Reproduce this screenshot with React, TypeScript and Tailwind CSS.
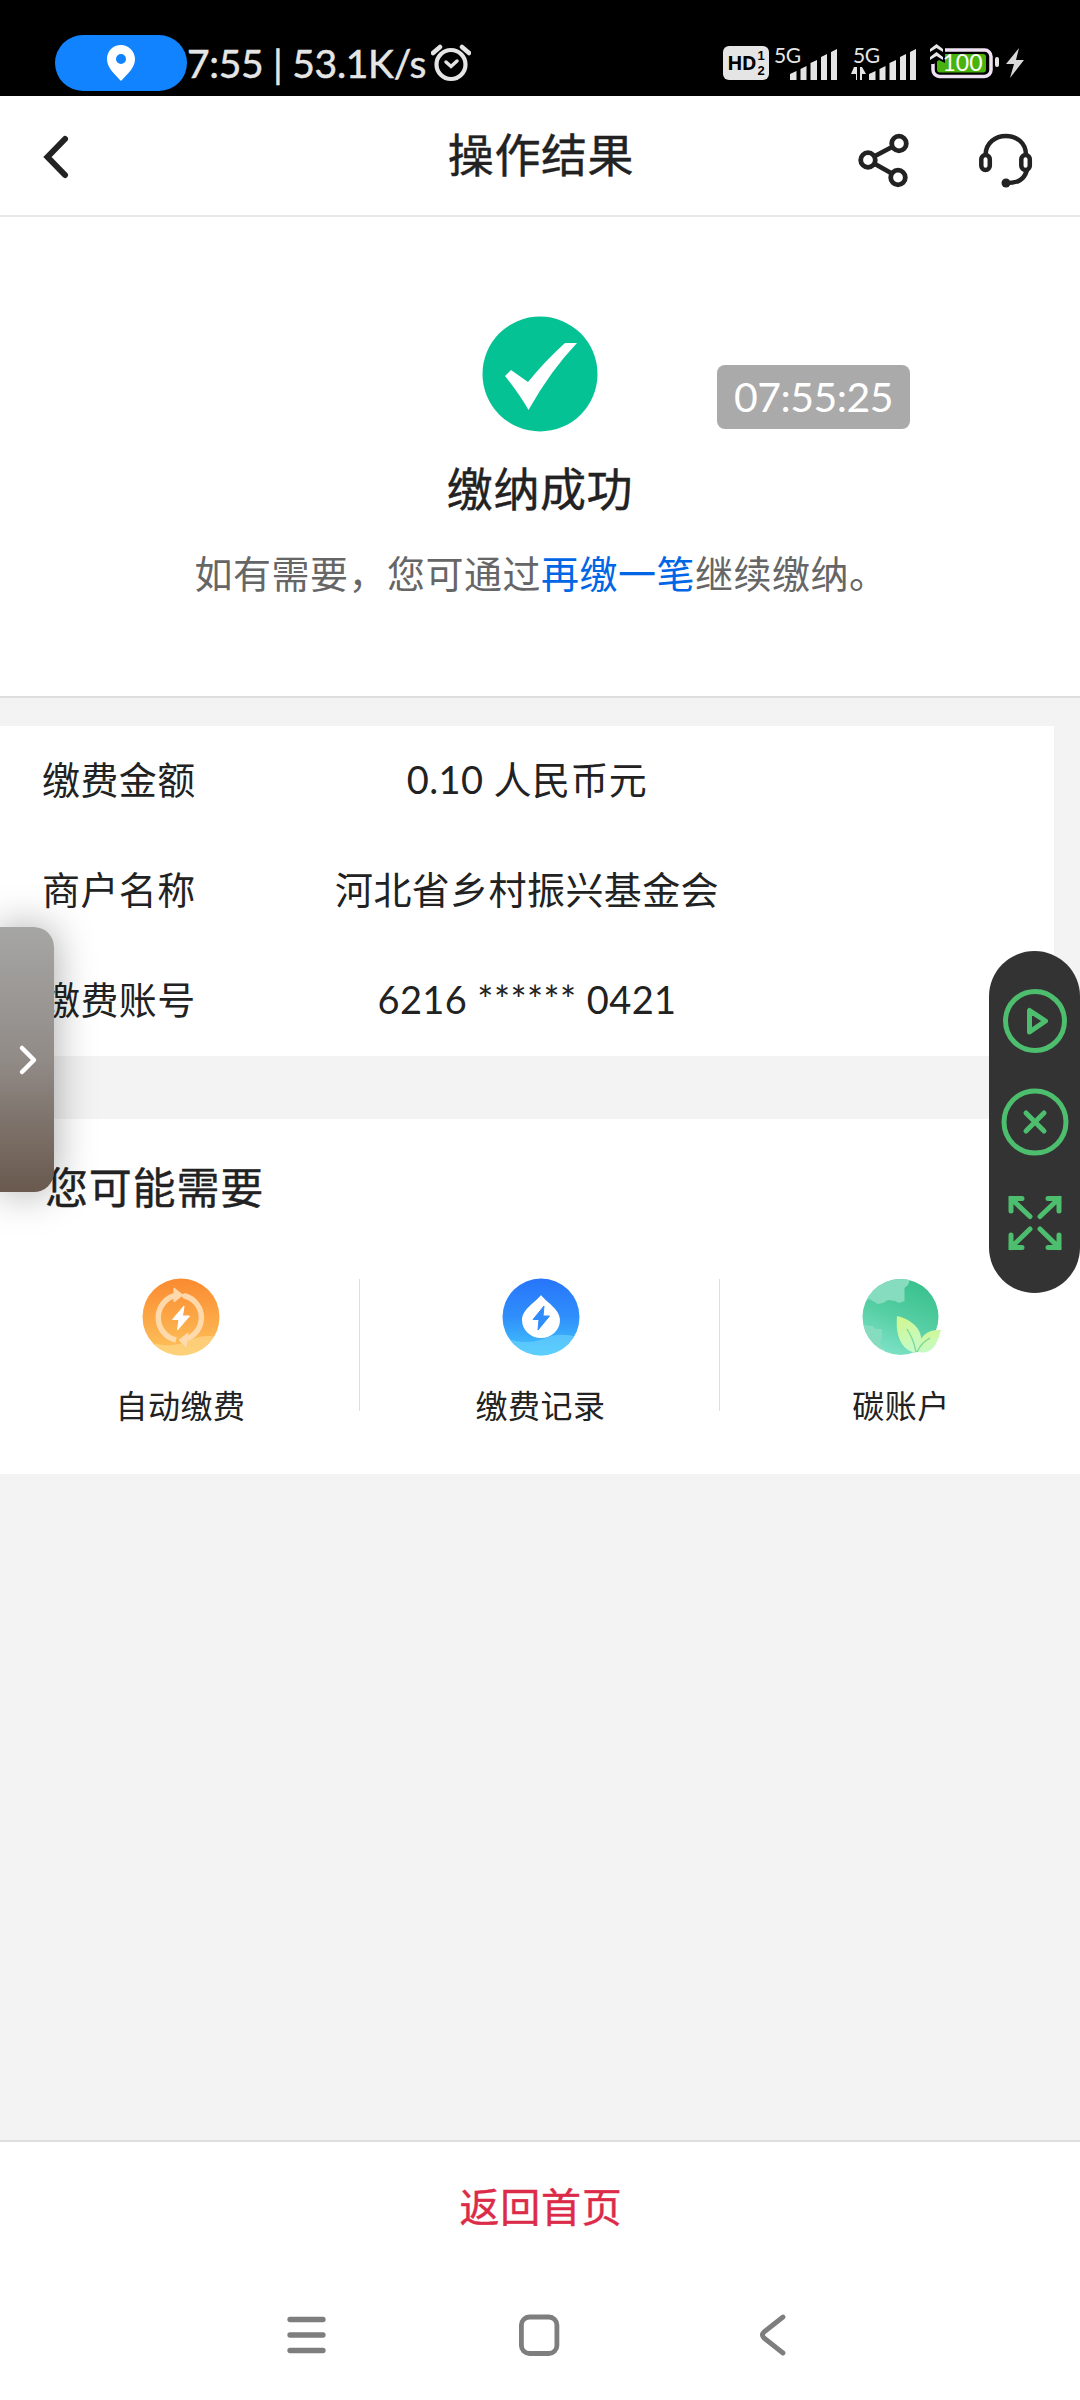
import React from 'react';

interface DetailRow {
  label: string;
  value: string;
}

interface Shortcut {
  name: string;
  icon: React.ReactNode;
}

const DETAILS: DetailRow[] = [
  { label: '缴费金额', value: '0.10 人民币元' },
  { label: '商户名称', value: '河北省乡村振兴基金会' },
  { label: '缴费账号', value: '6216 ****** 0421' },
];

const SHORTCUTS: Shortcut[] = [
  { name: '自动缴费', icon: <AutoPayIcon /> },
  { name: '缴费记录', icon: <PayRecordIcon /> },
  { name: '碳账户', icon: <CarbonIcon /> },
];

/* Icons */

function AutoPayIcon() {
  return (
    <svg className="w-20 h-20" viewBox="0 0 80 80">
      <defs>
        <linearGradient id="autoBg" x1="0" y1="0" x2="0" y2="1">
          <stop offset="0" stopColor="#fb8a30" />
          <stop offset="1" stopColor="#fdc35c" />
        </linearGradient>
        <clipPath id="autoClip">
          <circle cx="40" cy="40" r="38.5" />
        </clipPath>
      </defs>
      <circle cx="40" cy="40" r="38.5" fill="url(#autoBg)" />
      <path
        d="M0 63C14 68 28 70 42 66C54 61 64 56 78 61V80H0Z"
        fill="#fedb90"
        opacity="0.6"
        clipPath="url(#autoClip)"
      />
      <path d="M36 18A23 23 0 0 0 35 63" fill="none" stroke="#fed9ac" strokeWidth="5.5" />
      <path d="M44 19A22.5 22.5 0 0 1 45 62" fill="none" stroke="#fed9ac" strokeWidth="5.5" strokeLinecap="round" />
      <path d="M33 11L42 18L33 25Z M47 56L38 63L45 70Z" fill="#fed9ac" stroke="#fed9ac" strokeWidth="1" />
      <path d="M43 29L31.5 42.5H38L36.5 53L48.5 39H41.5Z" fill="#fff" stroke="#fff" strokeWidth="1" strokeLinejoin="round" />
    </svg>
  );
}

function PayRecordIcon() {
  return (
    <svg className="w-20 h-20" viewBox="0 0 80 80">
      <defs>
        <linearGradient id="recordBg" x1="0" y1="0" x2="0" y2="1">
          <stop offset="0" stopColor="#2775fb" />
          <stop offset="0.5" stopColor="#308ffb" />
          <stop offset="1" stopColor="#43c8fb" />
        </linearGradient>
        <clipPath id="recordClip">
          <circle cx="40" cy="40" r="38.5" />
        </clipPath>
      </defs>
      <circle cx="40" cy="40" r="38.5" fill="url(#recordBg)" />
      <path
        d="M0 60C14 65 28 67 42 62C54 57 64 56 80 61V80H0Z"
        fill="#6ed3fd"
        opacity="0.6"
        clipPath="url(#recordClip)"
      />
      <path d="M40 18C44 24 59 32 59 43A19 18 0 0 1 21 43C21 32 36 24 40 18Z" fill="#fff" />
      <path d="M43 29L32 42.5H38L37 53L48.5 39H42Z" fill="#318cfb" stroke="#318cfb" strokeWidth="1" strokeLinejoin="round" />
    </svg>
  );
}

function CarbonIcon() {
  return (
    <svg className="w-20 h-20" viewBox="0 0 80 80">
      <defs>
        <linearGradient id="carbonBg" x1="0.7" y1="0" x2="0.3" y2="1">
          <stop offset="0" stopColor="#38c08c" />
          <stop offset="0.5" stopColor="#55cea3" />
          <stop offset="1" stopColor="#7fe3c8" />
        </linearGradient>
        <linearGradient id="leafBg" x1="0" y1="0" x2="0.3" y2="1">
          <stop offset="0" stopColor="#d3f78b" />
          <stop offset="1" stopColor="#c5fac6" />
        </linearGradient>
        <clipPath id="carbonClip">
          <circle cx="39.5" cy="40" r="38" />
        </clipPath>
      </defs>
      <circle cx="39.5" cy="40" r="38" fill="url(#carbonBg)" />
      <g clipPath="url(#carbonClip)" fill="#86dcbf">
        <path d="M0 0H50L47 8L43.5 11V24L38 26L34 24L27 23L22 26L17 27L8 22L0 26Z" />
        <path d="M0 48L12 49L14 52H21V59L19 66L22 73L14 72L0 60Z" />
      </g>
      <path d="M36 39C52 43 62 53 60 67L55 76C43 74 34 63 36 39Z" fill="url(#leafBg)" />
      <path d="M80 53C67 52 57 59 56 75C72 78 76 67 80 53Z" fill="url(#leafBg)" />
      <path d="M46 52Q53 63 55 75M69 61Q60 66 56 75" fill="none" stroke="#77d79b" strokeWidth="1.3" />
    </svg>
  );
}

function SignalBars() {
  return (
    <svg className="w-12 h-[31px]" viewBox="0 0 48 31" fill="#e5e5e5">
      <path d="M0 25L6.5 22V31H0Z M10.5 20L16.5 17V31H10.5Z M20.5 14L27 11V31H20.5Z M31 8L37 5V31H31Z M41 3L47 0V31H41Z" />
    </svg>
  );
}

function StatusBar() {
  return (
    <div className="flex h-24 bg-black pl-[55px] pt-[35px] text-[#e5e5e5]">
      <div className="flex h-14 w-[132px] items-center justify-center rounded-full bg-[#1183fe]">
        <svg className="h-9 w-7" viewBox="0 0 28 36">
          <path
            d="M14 0C6 0 0 6 0 14C0 23 7 28 14 36C21 28 28 23 28 14C28 6 21 0 14 0ZM14 9A5 5 0 1 1 14 19A5 5 0 0 1 14 9Z"
            fill="#fff"
            fillRule="evenodd"
          />
        </svg>
      </div>
      <div className="flex h-14 w-[242px] items-center whitespace-pre font-['Lato'] text-[39px] tracking-[-0.3px] [-webkit-text-stroke:0.5px]">
        7:55 | 53.1K/s
      </div>
      <svg className="ml-0.5 mt-[9px] h-[38px] w-10" viewBox="0 0 40 38" fill="none" stroke="#e5e5e5">
        <circle cx="20" cy="20.5" r="14.5" strokeWidth="4.2" />
        <path d="M2 9L9 3M38 9L31 3" strokeWidth="4.5" strokeLinecap="round" />
        <path d="M15 18L20 22.5L26 17" strokeWidth="3.5" strokeLinecap="round" />
      </svg>

      {/* Network and battery */}
      <div className="ml-[252px] mt-[11px] flex h-[34px] w-[46px] justify-center rounded-[6px] bg-[#e5e5e5] font-['Open_Sans'] text-black">
        <span className="mt-[7px] text-[20px] font-bold leading-5 tracking-[-1px]">HD</span>
        <span className="ml-0.5 mt-0.5 flex flex-col font-['Liberation_Sans'] text-[13px] font-bold leading-[15px]">
          <span>1</span>
          <span>2</span>
        </span>
      </div>
      <div className="relative ml-1.5 mt-3.5 w-[63px] pl-[15px]">
        <SignalBars />
        <span className="absolute -top-[5px] -left-px font-['Lato'] text-[21px] leading-[21px] tracking-[-0.5px]">5G</span>
      </div>
      <div className="relative ml-[13px] mt-3.5 w-[66px] pl-[18px]">
        <SignalBars />
        <span className="absolute -top-[5px] left-0.5 font-['Lato'] text-[21px] leading-[21px] tracking-[-0.5px]">5G</span>
        <svg className="absolute left-0 top-[18px] h-[13px] w-4" viewBox="0 0 16 13" fill="#e5e5e5">
          <path d="M3 0H6V13H5V7H0Z M9 13H11V7H15L11 0H9Z" />
        </svg>
      </div>
      <svg className="ml-3 mt-2 h-9 w-[98px]" viewBox="0 0 98 36">
        <rect x="4" y="7" width="58" height="26.5" rx="6.5" fill="none" stroke="#efe3f3" strokeWidth="3.5" />
        <rect x="8" y="11" width="49" height="18.5" rx="3" fill="#48b30e" />
        <path d="M0 0H16V20L10 17L5 21H0Z" fill="#000" />
        <path d="M1 6L7.5 1L14 6V9L7.5 5L1 9ZM1 14L7.5 9L14 14V17L7.5 13L1 17Z" fill="#e9e9e9" />
        <text x="33.5" y="28" textAnchor="middle" fill="#fff" className="font-['Lato'] text-[23px]">
          100
        </text>
        <rect x="66" y="14" width="4" height="10" rx="2" fill="#e5e5e5" />
        <path d="M90 5L77 21H85L81 35L95 17H87Z" fill="#d8d8d8" />
      </svg>
    </div>
  );
}

function NavHeader() {
  return (
    <div className="flex h-[121px] items-center border-b-2 border-[#e8e8e8] bg-white">
      <div className="w-[360px] pl-[42px] pt-0.5">
        <svg className="h-11 w-7" viewBox="0 0 28 44" fill="none" stroke="#222" strokeWidth="6">
          <path d="M23 4L5.5 22L23 40" strokeLinecap="round" strokeLinejoin="miter" />
        </svg>
      </div>
      <h1 className="w-[360px] pb-0.5 pl-0.5 text-center text-[46px] tracking-[0.6px] [-webkit-text-stroke:0.4px]">操作结果</h1>
      <div className="flex w-[360px] gap-[68px] pl-[138px] pt-[9px]">
        <svg className="h-14 w-[52px]" viewBox="0 0 52 56" fill="none" stroke="#222" strokeWidth="4.8">
          <circle cx="41" cy="11.5" r="7.3" />
          <circle cx="10" cy="28" r="7.3" />
          <circle cx="40" cy="45.5" r="7.3" />
          <path d="M17 24L34 15M17 32L33 41" />
        </svg>
        <svg className="h-14 w-14" viewBox="0 0 56 56" fill="none" stroke="#222" strokeWidth="4.5">
          <path d="M7.5 23C8 -2.5 48 -2.5 48 23M49 38C46 48 40 51 28 51" />
          <rect x="3.3" y="23" width="8.5" height="15" rx="4.2" />
          <rect x="43.3" y="23" width="8.5" height="15" rx="4.2" />
          <circle cx="28" cy="51" r="4.5" fill="#222" stroke="none" />
        </svg>
      </div>
    </div>
  );
}

export default function App() {
  return (
    <div className="relative flex h-[2400px] w-[1080px] flex-col overflow-hidden bg-[#f3f3f3] font-['Lato','Noto_Sans_CJK_SC',sans-serif] text-[#222]">
      <StatusBar />
      <NavHeader />

      {/* Result */}
      <div className="relative flex h-[481px] flex-col items-center border-b-2 border-[#dedede] bg-white pt-[98px]">
        <svg className="h-[118px] w-[118px]" viewBox="0 0 118 118">
          <circle cx="59" cy="59" r="57.5" fill="#05c295" />
          <path d="M24 61L30 55L47 67Q64 46 84 28H96Q70 55 47.5 95Q39 80 24 61Z" fill="#fff" />
        </svg>
        <h2 className="mt-[22px] text-[46px] leading-[68px] tracking-[0.6px] [-webkit-text-stroke:0.4px]">缴纳成功</h2>
        <p className="mt-[22px] whitespace-nowrap pl-0.5 text-[38px] leading-[56px] tracking-[0.5px] text-[#666]">
          如有需要，您可通过<a className="text-[#0066e6]">再缴一笔</a>继续缴纳。
        </p>
        <div className="absolute left-[717px] top-[148px] flex h-16 w-[193px] items-center justify-center rounded-lg bg-[#aaa] text-[41px] tracking-[-0.5px] text-white">
          07:55:25
        </div>
      </div>

      {/* Payment details */}
      <div className="mt-7 h-[330px] w-[1054px] bg-white">
        {DETAILS.map((row) => (
          <div key={row.label} className="grid h-[110px] grid-cols-[263px_528px_263px] items-center pb-[3px] text-[38px] tracking-[0.4px]">
            <span className="pl-[42px]">{row.label}</span>
            <span className="text-center">{row.value}</span>
          </div>
        ))}
      </div>

      {/* Suggestions */}
      <div className="mt-[63px] h-[355px] bg-white pt-[37px]">
        <h3 className="pl-[45px] text-[43px] leading-[64px] tracking-[0.8px] [-webkit-text-stroke:0.4px]">您可能需要</h3>
        <div className="mt-[59px] grid h-[132px] grid-cols-3 grid-rows-[132px] divide-x divide-[#dedede]">
          {SHORTCUTS.map((item) => (
            <div key={item.name} className="flex flex-col items-center pl-0.5">
              <div className="-mt-0.5">{item.icon}</div>
              <span className="mt-[25px] whitespace-nowrap text-[32px] leading-[48px] tracking-[0.5px]">{item.name}</span>
            </div>
          ))}
        </div>
      </div>

      {/* Bottom action */}
      <div className="mt-auto flex h-[260px] flex-col border-t-2 border-[#dedede] bg-white">
        <button className="h-[130px] pl-0.5 text-[40px] tracking-[0.7px] text-[#dc2b49] [-webkit-text-stroke:0.4px]">返回首页</button>
        <div className="flex h-[126px] items-center pl-[287px]">
          <svg className="h-10 w-[39px]" viewBox="0 0 39 40" stroke="#7e7e7e" strokeWidth="5.3" strokeLinecap="round">
            <path d="M3 4.5H36M3 20H36M3 35.5H36" />
          </svg>
          <svg className="ml-[192px] h-[42px] w-[42px]" viewBox="0 0 42 42" fill="none" stroke="#7e7e7e" strokeWidth="4.8">
            <rect x="3.4" y="3" width="35.5" height="36.5" rx="8" />
          </svg>
          <svg className="ml-[199px] h-[42px] w-7" viewBox="0 0 28 42" fill="none" stroke="#7e7e7e" strokeWidth="4.8">
            <path d="M24 3L5 18Q2 21 5 24L24 39" strokeLinecap="round" strokeLinejoin="round" />
          </svg>
        </div>
      </div>

      {/* Side drawer handle */}
      <div className="absolute left-0 top-[927px] flex h-[265px] w-[54px] items-center rounded-r-[20px] bg-linear-to-b from-[#a6a6a4] via-[#918b87] to-[#69594e] pl-[18px] shadow-[0_0_40px_rgba(0,0,0,0.35)]">
        <svg className="h-8 w-5" viewBox="0 0 20 32" fill="none" stroke="#fff" strokeWidth="4.5">
          <path d="M4 4L16 16L4 28" strokeLinecap="round" strokeLinejoin="round" />
        </svg>
      </div>

      {/* Floating recorder controls */}
      <div className="absolute left-[989px] top-[951px] h-[342px] w-[91px] rounded-full bg-[#333]">
        <svg className="h-[342px] w-[91px]" viewBox="0 0 91 342" fill="none" stroke="#4dbd6e" strokeWidth="5" strokeLinecap="round">
          <circle cx="46" cy="70" r="29.5" />
          <path d="M40.5 59.5V81L56.5 70Z" strokeLinejoin="round" />
          <circle cx="46" cy="171" r="31" />
          <path d="M37 162L55 180M55 162L37 180" />
          <path d="M41 265.5L22 247.5M22 260V247.5H33M51 265.5L70 247.5M59 247.5H70V260M41 278L22 296.5M22 284V296.5H33M51 278L70 296.5M59 296.5H70V284" />
        </svg>
      </div>
    </div>
  );
}
